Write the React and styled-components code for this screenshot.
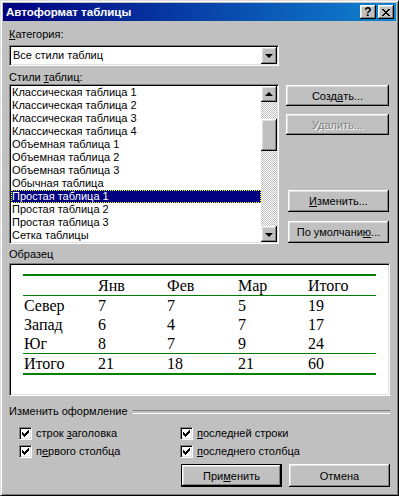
import React from 'react'
import styled, {createGlobalStyle, css} from 'styled-components'

const GlobalStyle = createGlobalStyle`
  html, body {
    margin: 0;
    padding: 0;
    background: #c0c0c0;
  }
  * { box-sizing: border-box; }
`

const raised = css`
  background: #c0c0c0;
  box-shadow: inset -1px -1px #000, inset 1px 1px #fff, inset -2px -2px #808080, inset 2px 2px #dfdfdf;
`

const sunken = css`
  border: 1px solid;
  border-color: #808080 #fff #fff #808080;
  box-shadow: inset 1px 1px #000, inset -1px -1px #dfdfdf;
  padding: 1px;
`

const Window = styled.div`
  width: 399px;
  height: 496px;
  background: #c0c0c0;
  border: 1px solid;
  border-color: #dfdfdf #000 #000 #dfdfdf;
  box-shadow: inset 1px 1px #fff, inset -1px -1px #808080;
  padding: 2px;
  font-family: "Liberation Sans", Arial, sans-serif;
  font-size: 11px;
  color: #000;
  -webkit-font-smoothing: none;
`

const TitleBar = styled.div`
  height: 18px;
  display: flex;
  align-items: center;
  padding: 0 2px 0 3px;
  background: linear-gradient(to right, #000080, #1084d0);
  color: #fff;
  font-weight: bold;
  font-size: 11.5px;
`

const TitleText = styled.div`
  flex: 1;
  white-space: nowrap;
`

const TitleButton = styled.div`
  ${raised};
  width: 16px;
  height: 14px;
  margin-left: 2px;
  display: flex;
  align-items: center;
  justify-content: center;
  color: #000;
  font-size: 12px;
  font-weight: bold;
  line-height: 14px;
`

const Content = styled.div`
  padding: 7px 6px 0 6px;
`

const Label = styled.div`
  height: 13px;
  line-height: 13px;
  margin-top: ${p => p.$top || 0}px;
  margin-bottom: ${p => p.$bottom || 0}px;
  white-space: nowrap;
`

const Combo = styled.div`
  ${sunken};
  width: 270px;
  height: 21px;
  background: #fff;
  display: flex;
`

const ComboText = styled.div`
  flex: 1;
  line-height: 17px;
  padding-left: 2px;
`

const ArrowButton = styled.div`
  ${raised};
  width: 16px;
  height: ${p => p.$h || 16}px;
  flex: none;
  display: flex;
  align-items: center;
  justify-content: center;
`

const Arrow = styled.span`
  width: 0;
  height: 0;
  border-left: 4px solid transparent;
  border-right: 4px solid transparent;
  ${p => p.$up
    ? css`border-bottom: 4px solid #000;`
    : css`border-top: 4px solid #000; margin-top: 1px;`}
`

const ListRow = styled.div`
  display: flex;
  justify-content: space-between;
`

const ListBox = styled.div`
  ${sunken};
  width: 270px;
  height: 160px;
  background: #fff;
  display: flex;
`

const Items = styled.div`
  flex: 1;
`

const Item = styled.div`
  height: 13px;
  line-height: 13px;
  padding-left: 1px;
  white-space: nowrap;
  ${p => p.$selected && css`
    background: #000080;
    color: #fff;
    outline: 1px dotted #ffff00;
    outline-offset: -1px;
  `}
`

const ScrollBar = styled.div`
  width: 16px;
  display: flex;
  flex-direction: column;
  background: repeating-conic-gradient(#c0c0c0 0 25%, #fff 0 50%) 0 0 / 2px 2px;
`

const Track = styled.div`
  height: ${p => p.$h ? p.$h + 'px' : 'auto'};
  flex: ${p => p.$h ? 'none' : 1};
`

const Thumb = styled.div`
  ${raised};
  height: 32px;
`

const SideButtons = styled.div`
  display: flex;
  flex-direction: column;
  align-items: flex-end;
  margin-right: 1px;
`

const Button = styled.div`
  ${raised};
  width: ${p => p.$w || 101}px;
  height: ${p => p.$h || 22}px;
  margin-top: ${p => p.$top || 0}px;
  display: flex;
  align-items: center;
  justify-content: center;
  white-space: nowrap;
  ${p => p.$disabled && css`
    color: #808080;
    text-shadow: 1px 1px #fff;
  `}
  ${p => p.$default && css`
    border: 1px solid #000;
  `}
`

const Preview = styled.div`
  ${sunken};
  height: 133px;
  background: #fff;
  padding: 10px 13px 0 13px;
  font-family: "Liberation Serif", "Times New Roman", serif;
  font-size: 16px;
`

const TableRow = styled.div`
  display: grid;
  grid-template-columns: 74px 69px 71px 70px 68px;
  height: ${p => 19 + (p.$top || 0) + (p.$bottom || 0)}px;
  line-height: 19px;
  border-top: ${p => p.$top || 0}px solid #008000;
  border-bottom: ${p => p.$bottom || 0}px solid #008000;
  span { padding-left: 1px; }
`

const GroupLabel = styled.div`
  display: flex;
  align-items: center;
  height: 13px;
  line-height: 13px;
  margin-top: 9px;
  &::after {
    content: '';
    flex: 1;
    margin-left: 5px;
    height: 2px;
    border-top: 1px solid #808080;
    border-bottom: 1px solid #fff;
  }
`

const Checks = styled.div`
  display: grid;
  grid-template-columns: 161px 1fr;
  grid-auto-rows: 18px;
  margin-top: 6px;
  padding-left: 10px;
`

const CheckRow = styled.label`
  display: flex;
  align-items: center;
  white-space: nowrap;
`

const Box = styled.span`
  width: 13px;
  height: 13px;
  flex: none;
  margin-right: 4px;
  background: #fff;
  border: 1px solid;
  border-color: #808080 #fff #fff #808080;
  box-shadow: inset 1px 1px #000, inset -1px -1px #dfdfdf;
  position: relative;
  svg { position: absolute; left: -1px; top: -1px; }
`

const Footer = styled.div`
  display: flex;
  justify-content: flex-end;
  gap: 7px;
  margin-top: 4px;
`

const checkPath = [2, 3, 4, 3, 2, 1, 0]
  .map((t, i) => `M${3 + i} ${3 + t}h1v3h-1z`)
  .join('')

function CheckBox({children}) {
  return (
    <CheckRow>
      <Box>
        <svg width="13" height="13" viewBox="0 0 13 13" shapeRendering="crispEdges">
          <path d={checkPath} fill="#000" />
        </svg>
      </Box>
      <span>{children}</span>
    </CheckRow>
  )
}

const styles = [
  'Классическая таблица 1',
  'Классическая таблица 2',
  'Классическая таблица 3',
  'Классическая таблица 4',
  'Объемная таблица 1',
  'Объемная таблица 2',
  'Объемная таблица 3',
  'Обычная таблица',
  'Простая таблица 1',
  'Простая таблица 2',
  'Простая таблица 3',
  'Сетка таблицы',
]

const rows = [
  {cells: ['', 'Янв', 'Фев', 'Мар', 'Итого'], top: 2, bottom: 1},
  {cells: ['Север', '7', '7', '5', '19']},
  {cells: ['Запад', '6', '4', '7', '17']},
  {cells: ['Юг', '8', '7', '9', '24']},
  {cells: ['Итого', '21', '18', '21', '60'], top: 1, bottom: 2},
]

export default function App() {
  return (
    <>
      <GlobalStyle />
      <Window>
        <TitleBar>
          <TitleText>Автоформат таблицы</TitleText>
          <TitleButton>?</TitleButton>
          <TitleButton>
            <svg width="8" height="7" viewBox="0 0 8 7" shapeRendering="crispEdges">
              <path d="M0 0h2v1h-2zM6 0h2v1h-2zM1 1h2v1h-2zM5 1h2v1h-2zM2 2h4v1h-4zM3 3h2v1h-2zM2 4h4v1h-4zM1 5h2v1h-2zM5 5h2v1h-2zM0 6h2v1h-2zM6 6h2v1h-2z" fill="#000" />
            </svg>
          </TitleButton>
        </TitleBar>
        <Content>
          <Label $bottom={4}><u>К</u>атегория:</Label>
          <Combo>
            <ComboText>Все стили таблиц</ComboText>
            <ArrowButton $h={17}><Arrow /></ArrowButton>
          </Combo>
          <Label $top={5}>Стили <u>т</u>аблиц:</Label>
          <ListRow>
            <ListBox>
              <Items>
                {styles.map((s, i) => (
                  <Item key={s} $selected={i === 8}>{s}</Item>
                ))}
              </Items>
              <ScrollBar>
                <ArrowButton><Arrow $up /></ArrowButton>
                <Track $h={17} />
                <Thumb />
                <Track />
                <ArrowButton><Arrow /></ArrowButton>
              </ScrollBar>
            </ListBox>
            <SideButtons>
              <Button $w={103} $h={21} $top={1}>Созд<u>а</u>ть...</Button>
              <Button $w={103} $h={21} $top={8} $disabled>Удалить...</Button>
              <Button $top={55}><u>И</u>зменить...</Button>
              <Button $top={9}>По умолчани<u>ю</u>...</Button>
            </SideButtons>
          </ListRow>
          <Label $top={4} $bottom={2}>Образец</Label>
          <Preview>
            {rows.map((r, i) => (
              <TableRow key={i} $top={r.top} $bottom={r.bottom}>
                {r.cells.map((c, j) => <span key={j}>{c}</span>)}
              </TableRow>
            ))}
          </Preview>
          <GroupLabel>Изменить оформление</GroupLabel>
          <Checks>
            <CheckBox>строк <u>з</u>аголовка</CheckBox>
            <CheckBox><u>п</u>оследней строки</CheckBox>
            <CheckBox>п<u>е</u>рвого столбца</CheckBox>
            <CheckBox><u>п</u>оследнего столбца</CheckBox>
          </Checks>
          <Footer>
            <Button $h={23} $default>При<u>м</u>енить</Button>
            <Button $h={23}>Отмена</Button>
          </Footer>
        </Content>
      </Window>
    </>
  )
}
